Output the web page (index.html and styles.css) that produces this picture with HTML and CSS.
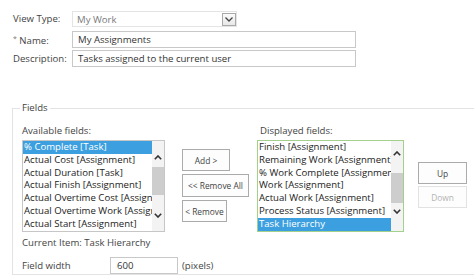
FILE: index.html
```html
<!DOCTYPE html>
<html>
<head>
<meta charset="utf-8">
<link rel="stylesheet" href="styles.css">
</head>
<body>
<div class="props">
  <div class="row r1">
    <span class="lbl">View Type:</span>
    <div class="select">
      <span>My Work</span>
      <span class="sel-btn"><svg width="8" height="5" viewBox="0 0 8 5"><polyline points="0.5,0.5 4,4 7.5,0.5" fill="none" stroke="#444" stroke-width="1.3"/></svg></span>
    </div>
  </div>
  <div class="row r2">
    <span class="lbl"><span class="req">*</span> Name:</span>
    <div class="input wide">My Assignments</div>
  </div>
  <div class="row r3">
    <span class="lbl">Description:</span>
    <div class="input wide">Tasks assigned to the current user</div>
  </div>
</div>

<fieldset class="fields">
  <legend>Fields</legend>
  <div class="inner">
    <div class="lab-row">
      <span class="avail-lab">Available fields:</span>
      <span>Displayed fields:</span>
    </div>
    <div class="lists-row">
      <div class="listbox avail-list">
        <div class="items">
          <div class="item sel">% Complete [Task]</div>
          <div class="item">Actual Cost [Assignment]</div>
          <div class="item">Actual Duration [Task]</div>
          <div class="item">Actual Finish [Assignment]</div>
          <div class="item">Actual Overtime Cost [Assignment]</div>
          <div class="item">Actual Overtime Work [Assignment]</div>
          <div class="item">Actual Start [Assignment]</div>
        </div>
        <div class="sb sb-a">
          <svg class="arr up" width="8" height="5" viewBox="0 0 8 5"><polyline points="0.8,4.3 4,1 7.2,4.3" fill="none" stroke="#333" stroke-width="1.6"/></svg>
          <div class="thumb"></div>
          <svg class="arr down" width="8" height="5" viewBox="0 0 8 5"><polyline points="0.8,0.7 4,4 7.2,0.7" fill="none" stroke="#333" stroke-width="1.6"/></svg>
        </div>
      </div>
      <div class="btns">
        <div class="btn b-add">Add &gt;</div>
        <div class="btn b-rall">&lt;&lt; Remove All</div>
        <div class="btn b-rem">&lt; Remove</div>
      </div>
      <div class="listbox disp-list">
        <div class="items">
          <div class="item">Finish [Assignment]</div>
          <div class="item">Remaining Work [Assignment]</div>
          <div class="item">% Work Complete [Assignment]</div>
          <div class="item">Work [Assignment]</div>
          <div class="item">Actual Work [Assignment]</div>
          <div class="item">Process Status [Assignment]</div>
          <div class="item sel">Task Hierarchy</div>
        </div>
        <div class="sb sb-d">
          <svg class="arr up" width="8" height="5" viewBox="0 0 8 5"><polyline points="0.8,4.3 4,1 7.2,4.3" fill="none" stroke="#333" stroke-width="1.6"/></svg>
          <div class="thumb"></div>
          <svg class="arr down" width="8" height="5" viewBox="0 0 8 5"><polyline points="0.8,0.7 4,4 7.2,0.7" fill="none" stroke="#333" stroke-width="1.6"/></svg>
        </div>
      </div>
      <div class="updown">
        <div class="btn b-up">Up</div>
        <div class="btn b-down">Down</div>
      </div>
    </div>
    <div class="current">Current Item: Task Hierarchy</div>
    <div class="fw-row">
      <span class="fw-lbl">Field width</span>
      <div class="input fw-input">600</div>
      <span class="px">(pixels)</span>
    </div>
  </div>
</fieldset>
</body>
</html>
```

FILE: styles.css
```css
html, body {
  margin: 0;
  padding: 0;
}
body {
  width: 474px;
  height: 278px;
  overflow: hidden;
  background: #fff;
  font-family: "Open Sans", "Noto Sans", sans-serif;
  font-size: 9.6px;
  color: #444;
}
.props {
  padding: 11px 0 0 13px;
  display: flex;
  flex-direction: column;
}
.row {
  display: flex;
  align-items: center;
}
.r2 { margin-top: 4px; }
.r3 { margin-top: 2px; }
.lbl {
  width: 59px;
  line-height: 14px;
  white-space: nowrap;
}
.req {
  font-size: 7px;
  color: #777;
  vertical-align: 3px;
}
.select {
  width: 165px;
  height: 16px;
  box-sizing: border-box;
  border: 1px solid #e4e4e4;
  display: flex;
  align-items: center;
  justify-content: space-between;
  padding-left: 4px;
  color: #7a7a7a;
}
.sel-btn {
  width: 14px;
  height: 13px;
  box-sizing: border-box;
  border: 1px solid #a9a9a9;
  background: linear-gradient(#fbfbfb, #e8e8e8);
  display: flex;
  align-items: center;
  justify-content: center;
}
.input {
  height: 17px;
  box-sizing: border-box;
  border: 1px solid #c8c8c8;
  padding-left: 5px;
  line-height: 15px;
  color: #333;
  white-space: nowrap;
}
.wide { width: 284px; }

.fields {
  margin: 34px 0 0 12px;
  padding: 9px 0 0 7px;
  border: 1px solid #e3e3e3;
  border-right: none;
  min-width: 0;
}
.fields legend {
  padding: 0 2px;
  line-height: 14px;
  color: #444;
}
.inner {
  margin-left: 2px;
}
.lab-row {
  display: flex;
  line-height: 14px;
  height: 14px;
  margin-bottom: 2px;
}
.avail-lab { width: 238px; }

.lists-row {
  display: flex;
  align-items: flex-start;
}
.listbox {
  height: 92px;
  box-sizing: border-box;
  border: 1px solid #c6c6c6;
  display: flex;
  background: #fff;
}
.avail-list { width: 143px; }
.disp-list {
  width: 147px;
  border-color: #a4d08e;
}
.items {
  flex: 1;
  min-width: 0;
  overflow: hidden;
}
.item {
  height: 12.8px;
  line-height: 12.8px;
  padding-left: 1px;
  white-space: nowrap;
  overflow: hidden;
  color: #222;
}
.item.sel {
  background: #3c9fe0;
  color: #fff;
}
.sb {
  width: 12px;
  background: #f3f3f3;
  display: flex;
  flex-direction: column;
  align-items: center;
}
.sb .thumb {
  width: 12px;
  background: #cdcdcd;
}
.arr { display: block; flex: none; }
.sb-a .up { margin-top: 14px; }
.sb-a .thumb { margin-top: 7px; height: 28px; }
.sb-a .down { margin-top: 18px; }
.sb-d .up { margin-top: 10px; }
.sb-d .thumb { margin-top: 17px; height: 30px; }
.sb-d .down { margin-top: 6px; }

.btns {
  width: 75px;
  margin-left: 17px;
  margin-top: 9px;
  display: flex;
  flex-direction: column;
  align-items: flex-start;
  gap: 3px;
}
.btn {
  height: 22px;
  box-sizing: border-box;
  border: 1px solid #ababab;
  background: #fdfdfd;
  display: flex;
  align-items: center;
  justify-content: center;
  font-size: 8.4px;
  color: #444;
  white-space: nowrap;
}
.b-add { width: 48px; }
.b-rall { width: 67px; height: 23px; }
.b-rem { width: 45px; }
.updown {
  margin-left: 14px;
  margin-top: 22px;
  display: flex;
  flex-direction: column;
  gap: 2px;
}
.b-up, .b-down { width: 49px; }
.b-down {
  border-color: #e2e2e2;
  color: #b3b3b3;
}
.current {
  margin-top: 4px;
  line-height: 14px;
}
.fw-row {
  margin-top: 7px;
  display: flex;
  align-items: center;
}
.fw-lbl { width: 88px; }
.fw-input {
  width: 68px;
  padding-left: 6px;
}
.px { margin-left: 4px; }
```
